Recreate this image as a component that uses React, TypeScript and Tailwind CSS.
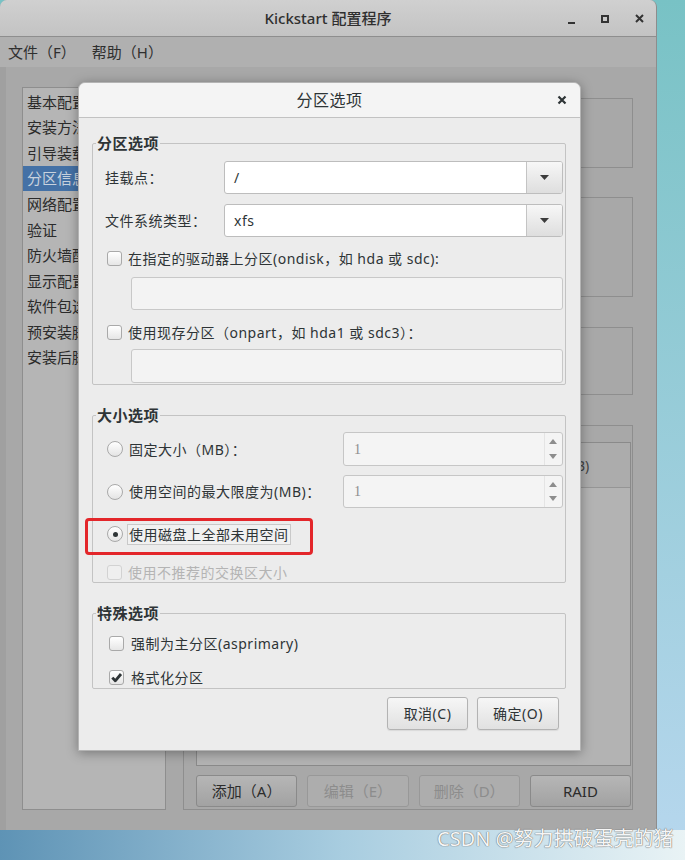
import React from "react";

const navItems = [
  "基本配置",
  "安装方法",
  "引导装载程序选项",
  "分区信息",
  "网络配置",
  "验证",
  "防火墙配置",
  "显示配置",
  "软件包选择",
  "预安装脚本",
  "安装后脚本",
];

const Check = ({ checked = false, disabled = false }: { checked?: boolean; disabled?: boolean }) => (
  <span
    className={
      disabled
        ? "flex w-[15px] h-[15px] shrink-0 rounded-[3px] border border-[#d2d2d2] bg-[#efefef]"
        : "flex w-[15px] h-[15px] shrink-0 items-center justify-center rounded-[3px] border border-[#a9a9a9] bg-gradient-to-b from-white to-[#e6e6e6]"
    }
  >
    {checked && (
      <svg width="13" height="13" viewBox="0 0 13 13">
        <path d="M2.3 6.6 L5.3 9.8 L11 3" fill="none" stroke="#2e3436" strokeWidth="2.8" strokeLinejoin="round" />
      </svg>
    )}
  </span>
);

const Radio = ({ on = false }: { on?: boolean }) => (
  <span className="flex w-[16px] h-[16px] shrink-0 items-center justify-center rounded-full border border-[#a9a9a9] bg-gradient-to-b from-white to-[#e4e4e4]">
    {on && <span className="w-[5px] h-[5px] rounded-full bg-[#2e3436]" />}
  </span>
);

const Combo = ({ value }: { value: string }) => (
  <div className="flex flex-1 self-stretch rounded-[3px] border border-[#bdbdbd] bg-white overflow-hidden">
    <div className="flex flex-1 items-center pl-[9px] text-[14px] text-[#2e3436]">{value}</div>
    <div className="flex w-[36px] items-center justify-center border-l border-[#c4c4c4] bg-gradient-to-b from-[#f7f7f7] to-[#dedede]">
      <svg width="9" height="5" viewBox="0 0 9 5">
        <polygon points="0,0 9,0 4.5,5" fill="#3c3c3c" />
      </svg>
    </div>
  </div>
);

const Spin = () => (
  <div className="flex flex-1 self-stretch rounded-[3px] border border-[#c6c6c6] bg-[#f4f4f4]">
    <div className="flex flex-1 items-center pl-[10px] text-[14px] text-[#8d8d8d] font-['Liberation_Serif',serif]">1</div>
    <div className="flex w-[18px] flex-col items-center justify-between border-l border-[#e4e4e4] py-[6px] pr-[2px]">
      <svg width="8" height="5" viewBox="0 0 8 5">
        <polygon points="0,5 8,5 4,0" fill="#8d8d8d" />
      </svg>
      <svg width="8" height="5" viewBox="0 0 8 5">
        <polygon points="0,0 8,0 4,5" fill="#8d8d8d" />
      </svg>
    </div>
  </div>
);

const Legend = ({ children }: { children: React.ReactNode }) => (
  <legend className="ml-[3px] px-[1px] text-[15px] font-bold leading-[20px] tracking-[0.5px] text-[#2e3436]">
    {children}
  </legend>
);

const BgButton = ({ label, disabled = false }: { label: string; disabled?: boolean }) => (
  <div
    className={
      disabled
        ? "flex items-center justify-center rounded-[3px] border border-[#989898] bg-[#adadad] text-[15px] text-[#8c8c8c]"
        : "flex items-center justify-center rounded-[3px] border border-[#8a8a8a] bg-gradient-to-b from-[#b6b6b6] to-[#a2a2a2] text-[15px] text-[#2c2c2c]"
    }
  >
    {label}
  </div>
);

export default function App() {
  return (
    <div className="relative w-[685px] h-[860px] overflow-hidden bg-gradient-to-b from-[#78c2c5] to-[#b7d7ee] font-['Noto_Sans','Noto_Sans_CJK_SC',sans-serif]">
      {/* background main window (dimmed) */}
      <div className="flex w-[657px] h-[830px] flex-col rounded-t-[7px] border-r border-[#8d8d8d] bg-[#a8a8a8] overflow-hidden">
        <div className="grid h-[37px] grid-cols-[1fr_auto_1fr] items-center border-b border-[#8e8e8e] bg-gradient-to-b from-[#d0d0d0] to-[#c3c3c3]">
          <div />
          <span className="text-[15px] font-medium text-[#2f2f2f]">Kickstart 配置程序</span>
          <div className="flex justify-end">
            <span className="flex w-[34px] h-[37px] items-end justify-center pb-[13px]">
              <span className="w-[7px] h-[2px] bg-[#333]" />
            </span>
            <span className="flex w-[34px] h-[37px] items-center justify-center">
              <span className="w-[8px] h-[8px] border-2 border-[#333]" />
            </span>
            <span className="flex w-[34px] h-[37px] items-center justify-center">
              <svg width="9" height="9" viewBox="0 0 9 9">
                <path d="M1 1 L8 8 M8 1 L1 8" stroke="#333" strokeWidth="2" />
              </svg>
            </span>
          </div>
        </div>

        <div className="flex h-[30px] items-center gap-[16px] pl-[8px] bg-[#b0b0b0] text-[15px] text-[#2f2f2f]">
          <span>文件（F）</span>
          <span>帮助（H）</span>
        </div>

        <div className="flex flex-1 items-start border-l-[6px] border-[#a0a0a0] pl-[16px]">
          <div className="mt-[20px] w-[144px] h-[723px] overflow-hidden border border-[#8e8e8e] bg-[#b5b5b5] pt-[1px]">
            {navItems.map((item) => (
              <div
                key={item}
                className={
                  item === "分区信息"
                    ? "flex h-[25.6px] items-center whitespace-nowrap bg-[#4471a6] pl-[4px] text-[15px] text-[#c8d2de]"
                    : "flex h-[25.6px] items-center whitespace-nowrap pl-[4px] text-[15px] text-[#2b2b2b]"
                }
              >
                {item}
              </div>
            ))}
          </div>

          <div className="ml-[17px] flex w-[450px] flex-col pt-[31px]">
            <div className="h-[70px] border border-[#8e8e8e]" />
            <div className="mt-[29px] h-[100px] border border-[#8e8e8e]" />
            <div className="mt-[30px] h-[68px] border border-[#8e8e8e]" />
            <div className="mt-[30px] flex h-[385px] flex-col border border-[#8e8e8e] pt-[16px] pl-[12px] pr-[1px]">
              <div className="flex h-[324px] flex-col border border-[#8a8a8a] bg-[#b3b3b3]">
                <div className="flex h-[45px] items-center border-b border-[#959595] bg-[#acacac] text-[14px] text-[#444]">
                  <span className="w-[120px] pl-[6px]">设备/分区编号</span>
                  <span className="w-[100px]">挂载点/RAID</span>
                  <span className="w-[60px]">类型</span>
                  <span className="w-[54px]">格式</span>
                  <span>大小(MB)</span>
                </div>
              </div>
              <div className="mt-[9px] grid h-[32px] grid-cols-4 gap-[10px]">
                <BgButton label="添加（A）" />
                <BgButton label="编辑（E）" disabled />
                <BgButton label="删除（D）" disabled />
                <BgButton label="RAID" />
              </div>
            </div>
          </div>
        </div>
      </div>
      <div className="h-[30px] bg-gradient-to-r from-[#5e93b5] via-[#a8cde0] to-[#e9f3f5]" />

      {/* modal dialog */}
      <div className="absolute left-[78px] top-[82px] flex w-[503px] flex-col rounded-t-[7px] border border-[#b4b4b4] bg-[#ececec] shadow-[0_2px_12px_rgba(0,0,0,0.35)] text-[14px] tracking-[0.5px] text-[#2e3436]">
        <div className="grid h-[35px] grid-cols-[1fr_auto_1fr] items-center rounded-t-[7px] border-b border-[#c2c2c2] bg-[#f4f4f4]">
          <div />
          <span className="text-[16px]">分区选项</span>
          <div className="flex justify-end pr-[13px]">
            <svg width="10" height="10" viewBox="0 0 10 10">
              <path d="M1.5 1.5 L8.5 8.5 M8.5 1.5 L1.5 8.5" stroke="#2e3436" strokeWidth="2.2" />
            </svg>
          </div>
        </div>

        <div className="flex flex-col pl-[13px] pr-[14px] pt-[15px] pb-[20px]">
          <fieldset className="rounded-[2px] border border-[#c3c3c3]">
            <Legend>分区选项</Legend>
            <div className="flex flex-col pl-[12px] pr-[2px] pt-[8px] pb-[1px]">
              <div className="flex h-[33px] items-center">
                <span className="w-[119px]">挂载点：</span>
                <Combo value="/" />
              </div>
              <div className="mt-[10px] flex h-[33px] items-center">
                <span className="w-[119px]">文件系统类型：</span>
                <Combo value="xfs" />
              </div>
              <div className="mt-[11px] ml-[2px] flex h-[20px] items-center gap-[6px]">
                <Check />
                <span>在指定的驱动器上分区(ondisk，如 hda 或 sdc):</span>
              </div>
              <div className="mt-[9px] ml-[26px] h-[33px] rounded-[3px] border border-[#c8c8c8] bg-[#f3f3f3]" />
              <div className="mt-[12px] ml-[2px] flex h-[20px] items-center gap-[6px]">
                <Check />
                <span>使用现存分区（onpart，如 hda1 或 sdc3）：</span>
              </div>
              <div className="mt-[7px] ml-[26px] h-[34px] rounded-[3px] border border-[#c8c8c8] bg-[#f3f3f3]" />
            </div>
          </fieldset>

          <fieldset className="mt-[20px] rounded-[2px] border border-[#c3c3c3]">
            <Legend>大小选项</Legend>
            <div className="flex flex-col pl-[14px] pr-[2px] pt-[7px]">
              <div className="flex h-[34px] items-center">
                <div className="flex w-[236px] items-center gap-[6px]">
                  <Radio />
                  <span>固定大小（MB）：</span>
                </div>
                <Spin />
              </div>
              <div className="mt-[9px] flex h-[33px] items-center">
                <div className="flex w-[236px] items-center gap-[6px] whitespace-nowrap">
                  <Radio />
                  <span>使用空间的最大限度为(MB)：</span>
                </div>
                <Spin />
              </div>
              <div className="mt-[15px] flex h-[22px] items-center gap-[4px]">
                <Radio on />
                <span className="flex h-[21px] items-center border border-[#c9c9c9] bg-[#f1f1f1] px-[1px]">使用磁盘上全部未用空间</span>
              </div>
              <div className="mt-[17px] flex h-[20px] items-center gap-[6px]">
                <Check disabled />
                <span className="text-[#b4b4b4]">使用不推荐的交换区大小</span>
              </div>
            </div>
          </fieldset>

          <fieldset className="mt-[20px] rounded-[2px] border border-[#c3c3c3]">
            <Legend>特殊选项</Legend>
            <div className="flex flex-col pl-[16px] pb-[1px]">
              <div className="mt-[10px] flex h-[20px] items-center gap-[7px]">
                <Check />
                <span>强制为主分区(asprimary)</span>
              </div>
              <div className="mt-[14px] flex h-[20px] items-center gap-[7px]">
                <Check checked />
                <span>格式化分区</span>
              </div>
            </div>
          </fieldset>

          <div className="mt-[8px] flex justify-end gap-[9px] pr-[7px]">
            <button className="flex h-[33px] w-[81px] items-center justify-center rounded-[3px] border border-[#b3b3b3] bg-gradient-to-b from-[#f6f6f6] to-[#e1e1e1] shadow-[0_1px_1px_rgba(0,0,0,0.08)]">
              取消(C)
            </button>
            <button className="flex h-[33px] w-[82px] items-center justify-center rounded-[3px] border border-[#b3b3b3] bg-gradient-to-b from-[#f6f6f6] to-[#e1e1e1] shadow-[0_1px_1px_rgba(0,0,0,0.08)]">
              确定(O)
            </button>
          </div>
        </div>

        {/* red annotation box */}
        <div className="absolute left-[6px] top-[435px] h-[37px] w-[228px] rounded-[4px] border-[3px] border-[#e3262a]" />
      </div>

      {/* watermark */}
      <div className="absolute left-[437px] top-[826px] whitespace-nowrap text-[20px] leading-[26px] text-[#f6f6f6] [text-shadow:0_0_1px_#6b6b6b,0_0_1px_#6b6b6b]">
        CSDN @努力拱破蛋壳的猪
      </div>
    </div>
  );
}
